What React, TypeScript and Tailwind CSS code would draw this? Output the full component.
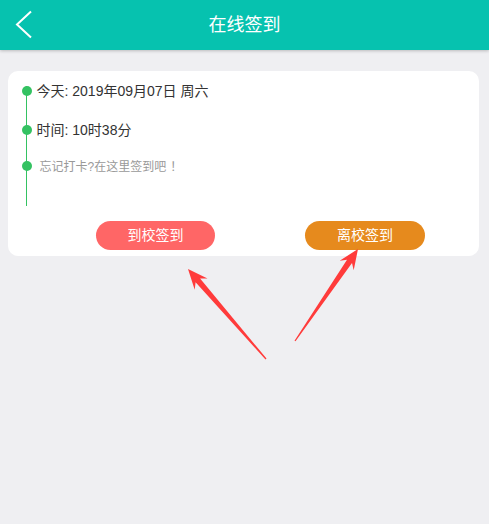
import React from "react";

type Pt = [number, number];

// red annotation arrow, drawn from tail to tip
function arrowPoints(tail: Pt, tip: Pt) {
  const dx = tip[0] - tail[0];
  const dy = tip[1] - tail[1];
  const len = Math.sqrt(dx * dx + dy * dy);
  const ux = dx / len;
  const uy = dy / len;
  const nx = -uy;
  const ny = ux;
  const at = (d: number, w: number): string =>
    `${(tip[0] - ux * d + nx * w).toFixed(1)},${(tip[1] - uy * d + ny * w).toFixed(1)}`;
  return [
    at(0, 0),
    at(20, 8.5),
    at(15, 3),
    at(len, 0.6),
    at(len, -0.6),
    at(15, -3),
    at(20, -8.5),
  ].join(" ");
}

const font = { fontFamily: '"Liberation Sans", "Noto Sans CJK SC", sans-serif' };
const cjk = { fontFamily: '"Noto Sans CJK SC", sans-serif' };

export default function App() {
  const rows = [
    { text: <>今天: 2019年09月07日 周六</>, cls: "text-[14px] text-[#333] ml-[5px]" },
    { text: <>时间: 10时38分</>, cls: "text-[14px] text-[#333] ml-[5px]" },
    {
      text: (
        <>
          忘记打卡?在这里签到吧<span className="ml-[4px]" style={cjk}>！</span>
        </>
      ),
      cls: "text-[12px] text-[#999] ml-[8px]",
    },
  ];

  return (
    <div className="relative min-h-screen bg-[#efeff2]" style={font}>
      <div className="relative z-10 grid h-[50px] grid-cols-[1fr_auto_1fr] items-center bg-[#06c2af] shadow-[0_1px_3px_rgba(0,0,0,0.22)]">
        <div className="pl-[15px]">
          <svg width="18" height="30" viewBox="0 0 18 30" className="block">
            <polyline points="16,1.5 2,14.5 16,27.5" fill="none" stroke="#fff" strokeWidth="2" />
          </svg>
        </div>
        <div className="text-[18px] text-white">在线签到</div>
        <div />
      </div>

      <div className="mx-[8px] mr-[10px] mt-[21px] rounded-[10px] bg-white pt-[15px] pb-[6px]">
        <div className="ml-[18px] flex flex-col gap-[29px] border-l border-[#34c262] pb-[35px]">
          {rows.map((r, i) => (
            <div key={i} className={`flex h-[10px] items-center ${i === 2 ? "-mt-[3px]" : ""}`}>
              <span className="-ml-[5.5px] h-[10px] w-[10px] shrink-0 rounded-full bg-[#34c262]" />
              <span className={`whitespace-nowrap leading-[10px] ${r.cls}`}>{r.text}</span>
            </div>
          ))}
        </div>
        <div className="mt-[15px] flex gap-[90px] pl-[88px]">
          <button className="h-[29px] w-[119px] rounded-full bg-[#ff6666] text-[14px] text-white">
            到校签到
          </button>
          <button className="h-[29px] w-[120px] rounded-full bg-[#e68a1d] text-[14px] text-white">
            离校签到
          </button>
        </div>
      </div>

      <svg className="pointer-events-none absolute left-0 top-0" width="489" height="524">
        <polygon points={arrowPoints([266, 359], [188, 269])} fill="#ff3b3b" />
        <polygon points={arrowPoints([295, 341], [358, 249])} fill="#ff3b3b" />
      </svg>
    </div>
  );
}
